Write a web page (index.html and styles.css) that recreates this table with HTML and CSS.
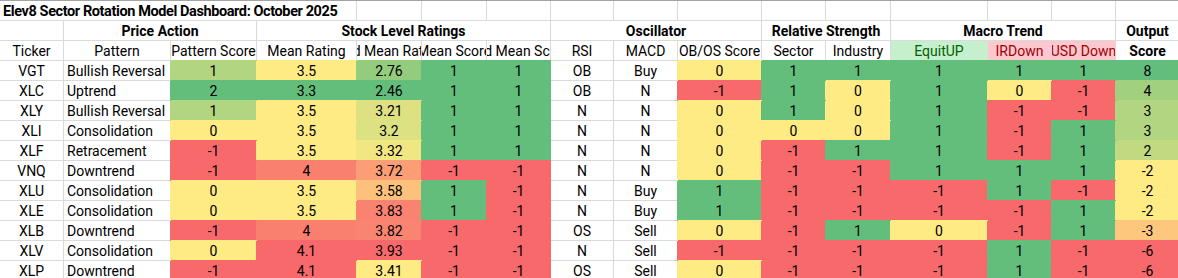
FILE: index.html
```html
<!DOCTYPE html>
<html lang="en">
<head>
<meta charset="utf-8">
<title>Elev8 Sector Rotation Model Dashboard</title>
<link rel="stylesheet" href="styles.css">
</head>
<body>
<div class="sheet">
  <!-- title row -->
  <div class="c l b title span4"><span>Elev8 Sector Rotation Model Dashboard: October 2025</span></div>
  <div class="c"></div><div class="c"></div><div class="c"></div><div class="c"></div>
  <div class="c"></div><div class="c"></div><div class="c"></div><div class="c"></div>
  <div class="c"></div><div class="c"></div><div class="c"></div><div class="c"></div>

  <!-- group header row -->
  <div class="c"></div>
  <div class="c b span2"><span>Price Action</span></div>
  <div class="c b span4"><span>Stock Level Ratings</span></div>
  <div class="c b span3"><span>Oscillator</span></div>
  <div class="c b span2"><span>Relative Strength</span></div>
  <div class="c b span3"><span>Macro Trend</span></div>
  <div class="c b"><span>Output</span></div>

  <!-- column header row -->
  <div class="c"><span>Ticker</span></div>
  <div class="c"><span>Pattern</span></div>
  <div class="c"><span>Pattern Score</span></div>
  <div class="c"><span>Mean Rating</span></div>
  <div class="c"><span>Wtd Mean Rating</span></div>
  <div class="c"><span>Mean Score</span></div>
  <div class="c"><span>Wtd Mean Score</span></div>
  <div class="c"><span>RSI</span></div>
  <div class="c"><span>MACD</span></div>
  <div class="c"><span>OB/OS Score</span></div>
  <div class="c"><span>Sector</span></div>
  <div class="c"><span>Industry</span></div>
  <div class="c good"><span>EquitUP</span></div>
  <div class="c bad"><span>IRDown</span></div>
  <div class="c bad"><span>USD Down</span></div>
  <div class="c b"><span>Score</span></div>

  <!-- VGT -->
  <div class="c"><span>VGT</span></div>
  <div class="c l"><span>Bullish Reversal</span></div>
  <div class="c f" style="--bg:#B1D580"><span>1</span></div>
  <div class="c f y"><span>3.5</span></div>
  <div class="c f" style="--bg:#94CC7E"><span>2.76</span></div>
  <div class="c f g"><span>1</span></div>
  <div class="c f g"><span>1</span></div>
  <div class="c"><span>OB</span></div>
  <div class="c"><span>Buy</span></div>
  <div class="c f y"><span>0</span></div>
  <div class="c f g"><span>1</span></div>
  <div class="c f g"><span>1</span></div>
  <div class="c f g"><span>1</span></div>
  <div class="c f g"><span>1</span></div>
  <div class="c f g"><span>1</span></div>
  <div class="c f g"><span>8</span></div>

  <!-- XLC -->
  <div class="c"><span>XLC</span></div>
  <div class="c l"><span>Uptrend</span></div>
  <div class="c f g"><span>2</span></div>
  <div class="c f g"><span>3.3</span></div>
  <div class="c f g"><span>2.46</span></div>
  <div class="c f g"><span>1</span></div>
  <div class="c f g"><span>1</span></div>
  <div class="c"><span>OB</span></div>
  <div class="c"><span>N</span></div>
  <div class="c f r"><span>-1</span></div>
  <div class="c f g"><span>1</span></div>
  <div class="c f y"><span>0</span></div>
  <div class="c f g"><span>1</span></div>
  <div class="c f y"><span>0</span></div>
  <div class="c f r"><span>-1</span></div>
  <div class="c f" style="--bg:#A1D07F"><span>4</span></div>

  <!-- XLY -->
  <div class="c"><span>XLY</span></div>
  <div class="c l"><span>Bullish Reversal</span></div>
  <div class="c f" style="--bg:#B1D580"><span>1</span></div>
  <div class="c f y"><span>3.5</span></div>
  <div class="c f" style="--bg:#DEE182"><span>3.21</span></div>
  <div class="c f g"><span>1</span></div>
  <div class="c f g"><span>1</span></div>
  <div class="c"><span>N</span></div>
  <div class="c"><span>N</span></div>
  <div class="c f y"><span>0</span></div>
  <div class="c f g"><span>1</span></div>
  <div class="c f y"><span>0</span></div>
  <div class="c f g"><span>1</span></div>
  <div class="c f r"><span>-1</span></div>
  <div class="c f r"><span>-1</span></div>
  <div class="c f" style="--bg:#B1D580"><span>3</span></div>

  <!-- XLI -->
  <div class="c"><span>XLI</span></div>
  <div class="c l"><span>Consolidation</span></div>
  <div class="c f y"><span>0</span></div>
  <div class="c f y"><span>3.5</span></div>
  <div class="c f" style="--bg:#DCE182"><span>3.2</span></div>
  <div class="c f g"><span>1</span></div>
  <div class="c f g"><span>1</span></div>
  <div class="c"><span>N</span></div>
  <div class="c"><span>N</span></div>
  <div class="c f y"><span>0</span></div>
  <div class="c f y"><span>0</span></div>
  <div class="c f y"><span>0</span></div>
  <div class="c f g"><span>1</span></div>
  <div class="c f r"><span>-1</span></div>
  <div class="c f g"><span>1</span></div>
  <div class="c f" style="--bg:#B1D580"><span>3</span></div>

  <!-- XLF -->
  <div class="c"><span>XLF</span></div>
  <div class="c l"><span>Retracement</span></div>
  <div class="c f r"><span>-1</span></div>
  <div class="c f y"><span>3.5</span></div>
  <div class="c f" style="--bg:#F0E783"><span>3.32</span></div>
  <div class="c f g"><span>1</span></div>
  <div class="c f g"><span>1</span></div>
  <div class="c"><span>N</span></div>
  <div class="c"><span>N</span></div>
  <div class="c f y"><span>0</span></div>
  <div class="c f r"><span>-1</span></div>
  <div class="c f g"><span>1</span></div>
  <div class="c f g"><span>1</span></div>
  <div class="c f r"><span>-1</span></div>
  <div class="c f g"><span>1</span></div>
  <div class="c f" style="--bg:#C1D980"><span>2</span></div>

  <!-- VNQ -->
  <div class="c"><span>VNQ</span></div>
  <div class="c l"><span>Downtrend</span></div>
  <div class="c f r"><span>-1</span></div>
  <div class="c f" style="--bg:#F97F6F"><span>4</span></div>
  <div class="c f" style="--bg:#FB9E75"><span>3.72</span></div>
  <div class="c f r"><span>-1</span></div>
  <div class="c f r"><span>-1</span></div>
  <div class="c"><span>N</span></div>
  <div class="c"><span>N</span></div>
  <div class="c f y"><span>0</span></div>
  <div class="c f r"><span>-1</span></div>
  <div class="c f r"><span>-1</span></div>
  <div class="c f g"><span>1</span></div>
  <div class="c f g"><span>1</span></div>
  <div class="c f g"><span>1</span></div>
  <div class="c f y"><span>-2</span></div>

  <!-- XLU -->
  <div class="c"><span>XLU</span></div>
  <div class="c l"><span>Consolidation</span></div>
  <div class="c f y"><span>0</span></div>
  <div class="c f y"><span>3.5</span></div>
  <div class="c f" style="--bg:#FDC17C"><span>3.58</span></div>
  <div class="c f g"><span>1</span></div>
  <div class="c f r"><span>-1</span></div>
  <div class="c"><span>N</span></div>
  <div class="c"><span>Buy</span></div>
  <div class="c f g"><span>1</span></div>
  <div class="c f r"><span>-1</span></div>
  <div class="c f r"><span>-1</span></div>
  <div class="c f r"><span>-1</span></div>
  <div class="c f g"><span>1</span></div>
  <div class="c f r"><span>-1</span></div>
  <div class="c f y"><span>-2</span></div>

  <!-- XLE -->
  <div class="c"><span>XLE</span></div>
  <div class="c l"><span>Consolidation</span></div>
  <div class="c f y"><span>0</span></div>
  <div class="c f y"><span>3.5</span></div>
  <div class="c f" style="--bg:#F98270"><span>3.83</span></div>
  <div class="c f g"><span>1</span></div>
  <div class="c f r"><span>-1</span></div>
  <div class="c"><span>N</span></div>
  <div class="c"><span>Buy</span></div>
  <div class="c f g"><span>1</span></div>
  <div class="c f r"><span>-1</span></div>
  <div class="c f r"><span>-1</span></div>
  <div class="c f r"><span>-1</span></div>
  <div class="c f r"><span>-1</span></div>
  <div class="c f g"><span>1</span></div>
  <div class="c f y"><span>-2</span></div>

  <!-- XLB -->
  <div class="c"><span>XLB</span></div>
  <div class="c l"><span>Downtrend</span></div>
  <div class="c f r"><span>-1</span></div>
  <div class="c f" style="--bg:#F97F6F"><span>4</span></div>
  <div class="c f" style="--bg:#F98470"><span>3.82</span></div>
  <div class="c f r"><span>-1</span></div>
  <div class="c f r"><span>-1</span></div>
  <div class="c"><span>OS</span></div>
  <div class="c"><span>Sell</span></div>
  <div class="c f y"><span>0</span></div>
  <div class="c f r"><span>-1</span></div>
  <div class="c f g"><span>1</span></div>
  <div class="c f y"><span>0</span></div>
  <div class="c f r"><span>-1</span></div>
  <div class="c f g"><span>1</span></div>
  <div class="c f" style="--bg:#FDC87E"><span>-3</span></div>

  <!-- XLV -->
  <div class="c"><span>XLV</span></div>
  <div class="c l"><span>Consolidation</span></div>
  <div class="c f y"><span>0</span></div>
  <div class="c f r"><span>4.1</span></div>
  <div class="c f r"><span>3.93</span></div>
  <div class="c f r"><span>-1</span></div>
  <div class="c f r"><span>-1</span></div>
  <div class="c"><span>N</span></div>
  <div class="c"><span>Sell</span></div>
  <div class="c f r"><span>-1</span></div>
  <div class="c f r"><span>-1</span></div>
  <div class="c f r"><span>-1</span></div>
  <div class="c f r"><span>-1</span></div>
  <div class="c f g"><span>1</span></div>
  <div class="c f r"><span>-1</span></div>
  <div class="c f r"><span>-6</span></div>

  <!-- XLP -->
  <div class="c"><span>XLP</span></div>
  <div class="c l"><span>Downtrend</span></div>
  <div class="c f r"><span>-1</span></div>
  <div class="c f r"><span>4.1</span></div>
  <div class="c f y"><span>3.41</span></div>
  <div class="c f r"><span>-1</span></div>
  <div class="c f r"><span>-1</span></div>
  <div class="c"><span>OS</span></div>
  <div class="c"><span>Sell</span></div>
  <div class="c f y"><span>0</span></div>
  <div class="c f r"><span>-1</span></div>
  <div class="c f r"><span>-1</span></div>
  <div class="c f r"><span>-1</span></div>
  <div class="c f g"><span>1</span></div>
  <div class="c f r"><span>-1</span></div>
  <div class="c f r"><span>-6</span></div>
</div>
</body>
</html>
```

FILE: styles.css
```css
html, body {
  margin: 0;
  padding: 0;
  background: #ffffff;
  overflow: hidden;
}

body {
  font-family: Roboto, "Liberation Sans", Arial, sans-serif;
  font-size: 14px;
  color: #000000;
}

.sheet {
  display: grid;
  grid-template-columns: 64px 107px 86px 100px 65px 65px 64px 63px 64px 84px 64px 65px 97px 64px 64px 64px;
  grid-auto-rows: 20px;
  width: max-content;
  border-top: 1px solid #a3a3a3;
}

.c {
  box-sizing: border-box;
  border-right: 1px solid #dadada;
  border-bottom: 1px solid #dadada;
  display: flex;
  align-items: center;
  justify-content: center;
  overflow: hidden;
  white-space: nowrap;
  line-height: 19px;
  padding-top: 1px;
}

.c > span {
  flex: none;
}

.l {
  justify-content: flex-start;
  padding-left: 3px;
}

.b {
  font-weight: 700;
}

.title {
  font-size: 14.5px;
  letter-spacing: -0.4px;
}

.span2 { grid-column: span 2; }
.span3 { grid-column: span 3; }
.span4 { grid-column: span 4; }

/* filled cells hide their gridlines */
.f {
  background: var(--bg);
  border-color: transparent;
  box-shadow: -1px 0 0 var(--bg), 0 -1px 0 var(--bg);
}

.g { --bg: #63be7b; }
.y { --bg: #ffeb84; }
.r { --bg: #f8696b; }

.good {
  background: #c6efce;
  color: #006100;
  border-color: transparent;
}

.bad {
  background: #ffc7ce;
  color: #9c0006;
  border-color: transparent;
}
```
